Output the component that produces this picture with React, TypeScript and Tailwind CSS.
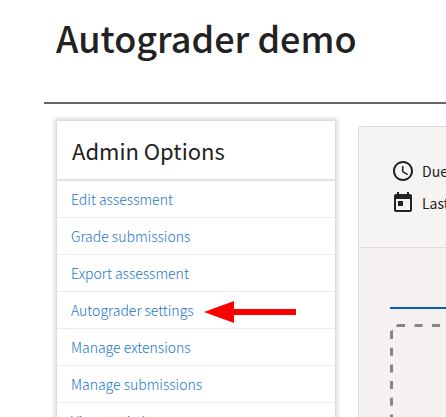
import { MdAccessTime, MdToday } from 'react-icons/md'

const adminLinks = [
  { label: 'Edit assessment', href: '#edit' },
  { label: 'Grade submissions', href: '#grade' },
  { label: 'Export assessment', href: '#export' },
  { label: 'Autograder settings', href: '#autograder', marked: true },
  { label: 'Manage extensions', href: '#extensions' },
  { label: 'Manage submissions', href: '#manage' },
  { label: 'View statistics', href: '#statistics' },
]

function RedArrow() {
  return (
    <svg className="mt-1 ml-[10px] h-[22px] w-[92px] shrink-0" viewBox="0 0 92 22" aria-hidden="true">
      <path d="M0 11 30 0v8h62v6H30v8z" fill="#ff0000" />
    </svg>
  )
}

function AdminOptions() {
  return (
    <nav className="w-[280px] shrink-0 self-start border border-[#dcdcdc] bg-white shadow-[0_0_5px_1px_rgba(0,0,0,0.18)]">
      <h2 className="border-b-2 border-[#e2e2e2] px-[15px] py-[11px] text-[22px] leading-9">Admin Options</h2>
      <ul>
        {adminLinks.map((link) => (
          <li key={link.href} className="flex h-[37px] items-center border-b border-[#ececec] px-[14px]">
            <a href={link.href} className="text-sm font-light whitespace-nowrap text-[#1874cd]">
              {link.label}
            </a>
            {link.marked && <RedArrow />}
          </li>
        ))}
      </ul>
    </nav>
  )
}

function DropZone() {
  return (
    <div className="relative mt-[15px] flex-1 overflow-hidden">
      <svg className="absolute inset-0 h-full w-full" fill="none" stroke="#868686" strokeWidth="3" aria-hidden="true">
        <path d="M1.5 8Q2 7 3 6.5M6.5 3Q7 2 8 1.5" strokeWidth="2" stroke="#a5a1a1" />
        <path d="M7 1.5H800" strokeDasharray="8 9.5" />
        <path d="M1.5 7V900" strokeDasharray="8 8.7" />
      </svg>
    </div>
  )
}

function Assessment() {
  return (
    <main className="mt-[6px] flex min-w-0 flex-1 flex-col overflow-hidden rounded-tl border-t border-l border-[#dcdcdc] bg-[#f4f1f0]">
      <div className="flex flex-col gap-2 border-b border-[#dfdddc] bg-[#f5f4f3] pt-8 pb-8 pl-8 text-sm leading-6 whitespace-nowrap">
        <p className="flex items-center gap-[7px]">
          <MdAccessTime className="size-6 shrink-0" />
          Due
        </p>
        <p className="flex items-center gap-[7px]">
          <MdToday className="size-6 shrink-0" />
          Last
        </p>
      </div>
      <div className="flex flex-1 flex-col pt-[59px] pl-[31px]">
        <div className="border-b-2 border-[#0a5cb5]" />
        <DropZone />
      </div>
    </main>
  )
}

export default function App() {
  return (
    <div className="flex h-screen flex-col overflow-hidden bg-white font-['Noto_Sans_CJK_SC',sans-serif] text-base text-[#222]">
      <header className="ml-11 border-b-2 border-[#666] px-3 pt-[13px] pb-[41px]">
        <h1 className="text-4xl leading-[48px] font-medium whitespace-nowrap">Autograder demo</h1>
      </header>
      <div className="flex min-h-0 flex-1 gap-[22px] pt-4 pl-14">
        <AdminOptions />
        <Assessment />
      </div>
    </div>
  )
}
